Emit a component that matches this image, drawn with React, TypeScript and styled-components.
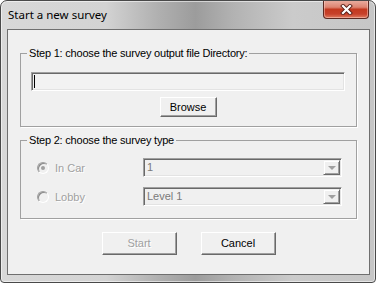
import React from 'react';
import styled, { createGlobalStyle } from 'styled-components';

const Global = createGlobalStyle`
  html, body { margin: 0; padding: 0; background: #fff; }
  body { font-family: "Liberation Sans", Arial, sans-serif; font-size: 11px; }
`;

const Window = styled.div`
  width: 376px;
  height: 283px;
  box-sizing: border-box;
  border: 1px solid #494949;
  border-radius: 7px 7px 4px 4px;
  background: linear-gradient(90deg, #d8d8d8 0%, #d3d3d3 28%, #b0b0b0 42%, #9c9c9c 52%, #b2b2b2 62%, #cbcbcb 78%, #c6c6c6 100%);
  box-shadow: inset 0 0 0 1px rgba(255, 255, 255, 0.55);
  display: flex;
  flex-direction: column;
  overflow: hidden;
`;

const TitleBar = styled.div`
  height: 28px;
  display: flex;
  align-items: center;
  justify-content: space-between;
  padding: 0 6px 0 7px;
`;

const Title = styled.span`
  font-family: "Noto Sans", "Open Sans", sans-serif;
  font-size: 11.5px;
  color: #000;
  margin-top: -1px;
`;

const CloseButton = styled.div`
  align-self: flex-start;
  margin-top: -1px;
  width: 46px;
  height: 19px;
  box-sizing: border-box;
  border: 1px solid #5c2a22;
  border-top: none;
  border-radius: 0 0 4px 4px;
  background: linear-gradient(#eab1a4 0%, #dd8471 40%, #c3391f 52%, #c7412a 78%, #e07c60 100%);
  box-shadow: inset 0 0 0 1px rgba(255, 220, 210, 0.45);
  display: flex;
  align-items: center;
  justify-content: center;
`;

const Client = styled.div`
  flex: 1;
  margin: 0 5px 7px 6px;
  border: 1px solid #6f6f6f;
  background: #f0f0f0;
  padding: 17px 12px 0 12px;
  display: flex;
  flex-direction: column;
`;

const Group = styled.fieldset<{ $top?: number }>`
  margin: ${p => p.$top ?? 0}px 0 0 0;
  padding: 0;
  border: 1px solid #a0a0a0;
  box-shadow: 1px 1px 0 #fff;
  min-width: 0;
`;

const Legend = styled.legend`
  margin-left: 6px;
  padding: 0 2px;
  line-height: 13px;
  letter-spacing: -0.2px;
  color: #000;
`;

const Step1Body = styled.div`
  padding: 12px 11px 9px 10px;
  display: flex;
  flex-direction: column;
  align-items: center;
  gap: 6px;
`;

const TextBox = styled.div`
  width: 100%;
  height: 19px;
  box-sizing: border-box;
  border: 1px solid;
  border-color: #a0a0a0 #fff #fff #a0a0a0;
  box-shadow: inset 1px 1px 0 #696969, inset -1px -1px 0 #e3e3e3;
  background: #f2f2f2;
  display: flex;
  align-items: center;
  padding-left: 2px;
`;

const Caret = styled.span`
  width: 1px;
  height: 13px;
  background: #000;
`;

const Button = styled.div<{ $w: number; $h: number; $disabled?: boolean }>`
  width: ${p => p.$w}px;
  height: ${p => p.$h}px;
  box-sizing: border-box;
  border: 1px solid;
  border-color: #fff #696969 #696969 #fff;
  box-shadow: inset -1px -1px 0 #a0a0a0;
  background: #f0f0f0;
  display: flex;
  align-items: center;
  justify-content: center;
  padding-bottom: 1px;
  color: ${p => (p.$disabled ? '#a0a0a0' : '#000')};
  text-shadow: ${p => (p.$disabled ? '1px 1px 0 #fff' : 'none')};
`;

const Step2Body = styled.div`
  padding: 11px 14px 12px 16px;
  display: grid;
  grid-template-columns: 106px 199px;
  row-gap: 10px;
  align-items: center;
`;

const RadioRow = styled.div`
  display: flex;
  align-items: center;
  gap: 6px;
`;

const RadioCircle = styled.span<{ $checked?: boolean }>`
  width: 12px;
  height: 12px;
  box-sizing: border-box;
  border-radius: 50%;
  border: 1px solid;
  border-color: #a0a0a0 #fff #fff #a0a0a0;
  box-shadow: inset 1px 1px 0 #8a8a8a;
  background: #f0f0f0;
  display: flex;
  align-items: center;
  justify-content: center;
  &::after {
    content: '';
    width: 4px;
    height: 4px;
    border-radius: 50%;
    background: ${p => (p.$checked ? '#a0a0a0' : 'transparent')};
  }
`;

const DisabledLabel = styled.span`
  color: #a0a0a0;
  text-shadow: 1px 1px 0 #fff;
`;

const Combo = styled.div`
  height: 19px;
  box-sizing: border-box;
  border: 1px solid;
  border-color: #a0a0a0 #fff #fff #a0a0a0;
  box-shadow: inset 1px 1px 0 #696969, inset -1px -1px 0 #e3e3e3;
  background: #f0f0f0;
  display: flex;
  align-items: stretch;
  padding: 1px;
`;

const ComboText = styled.span`
  flex: 1;
  color: #7a7a7a;
  padding-left: 2px;
  line-height: 15px;
`;

const DropButton = styled.div`
  width: 17px;
  box-sizing: border-box;
  border: 1px solid;
  border-color: #f0f0f0 #696969 #696969 #f0f0f0;
  box-shadow: inset 1px 1px 0 #fff, inset -1px -1px 0 #a0a0a0;
  background: #f0f0f0;
  display: flex;
  align-items: center;
  justify-content: center;
  &::after {
    content: '';
    border-left: 4px solid transparent;
    border-right: 4px solid transparent;
    border-top: 4px solid #a0a0a0;
    margin-top: 1px;
  }
`;

const ButtonRow = styled.div`
  margin-top: 13px;
  display: flex;
  justify-content: center;
  gap: 24px;
`;

function CloseIcon() {
  return (
    <svg width="13" height="11" viewBox="0 0 13 11">
      <path d="M3 2 L10 9 M10 2 L3 9" stroke="#5a2018" strokeWidth="4" strokeLinecap="square" fill="none" />
      <path d="M3 2 L10 9 M10 2 L3 9" stroke="#fff" strokeWidth="2.2" strokeLinecap="square" fill="none" />
    </svg>
  );
}

export default function App() {
  return (
    <>
      <Global />
      <Window>
        <TitleBar>
          <Title>Start a new survey</Title>
          <CloseButton>
            <CloseIcon />
          </CloseButton>
        </TitleBar>
        <Client>
          <Group>
            <Legend>Step 1: choose the survey output file Directory:</Legend>
            <Step1Body>
              <TextBox>
                <Caret />
              </TextBox>
              <Button $w={57} $h={20}>Browse</Button>
            </Step1Body>
          </Group>
          <Group $top={7}>
            <Legend>Step 2: choose the survey type</Legend>
            <Step2Body>
              <RadioRow>
                <RadioCircle $checked />
                <DisabledLabel>In Car</DisabledLabel>
              </RadioRow>
              <Combo>
                <ComboText>1</ComboText>
                <DropButton />
              </Combo>
              <RadioRow>
                <RadioCircle />
                <DisabledLabel>Lobby</DisabledLabel>
              </RadioRow>
              <Combo>
                <ComboText>Level 1</ComboText>
                <DropButton />
              </Combo>
            </Step2Body>
          </Group>
          <ButtonRow>
            <Button $w={75} $h={23} $disabled>Start</Button>
            <Button $w={75} $h={23}>Cancel</Button>
          </ButtonRow>
        </Client>
      </Window>
    </>
  );
}
